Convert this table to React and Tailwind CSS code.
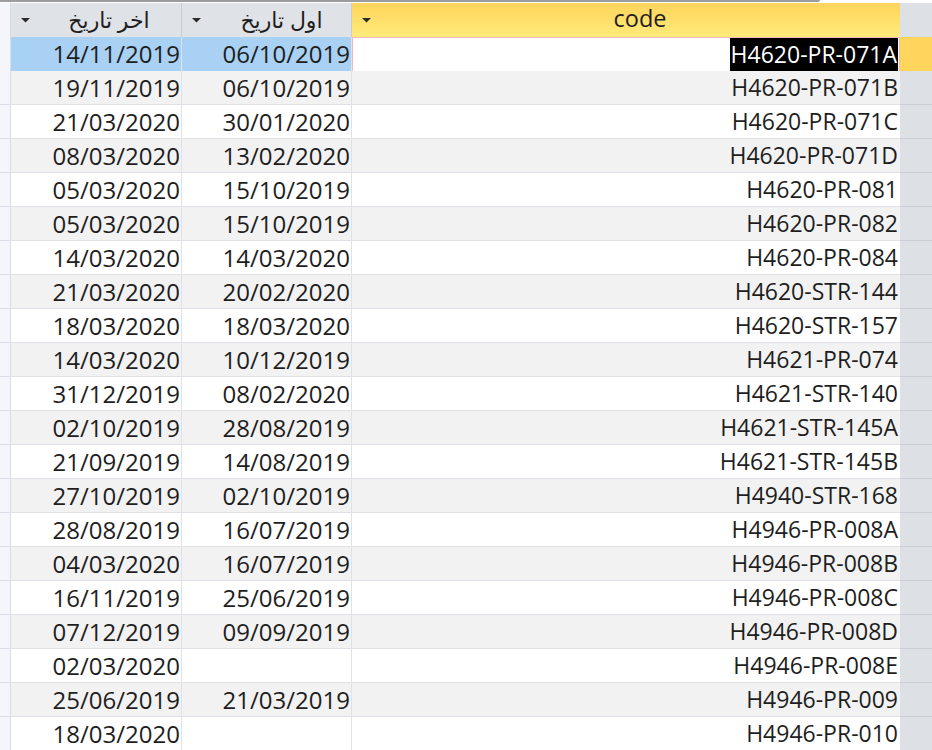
const rows = [
  ['14/11/2019', '06/10/2019', 'H4620-PR-071A'],
  ['19/11/2019', '06/10/2019', 'H4620-PR-071B'],
  ['21/03/2020', '30/01/2020', 'H4620-PR-071C'],
  ['08/03/2020', '13/02/2020', 'H4620-PR-071D'],
  ['05/03/2020', '15/10/2019', 'H4620-PR-081'],
  ['05/03/2020', '15/10/2019', 'H4620-PR-082'],
  ['14/03/2020', '14/03/2020', 'H4620-PR-084'],
  ['21/03/2020', '20/02/2020', 'H4620-STR-144'],
  ['18/03/2020', '18/03/2020', 'H4620-STR-157'],
  ['14/03/2020', '10/12/2019', 'H4621-PR-074'],
  ['31/12/2019', '08/02/2020', 'H4621-STR-140'],
  ['02/10/2019', '28/08/2019', 'H4621-STR-145A'],
  ['21/09/2019', '14/08/2019', 'H4621-STR-145B'],
  ['27/10/2019', '02/10/2019', 'H4940-STR-168'],
  ['28/08/2019', '16/07/2019', 'H4946-PR-008A'],
  ['04/03/2020', '16/07/2019', 'H4946-PR-008B'],
  ['16/11/2019', '25/06/2019', 'H4946-PR-008C'],
  ['07/12/2019', '09/09/2019', 'H4946-PR-008D'],
  ['02/03/2020', '', 'H4946-PR-008E'],
  ['25/06/2019', '21/03/2019', 'H4946-PR-009'],
  ['18/03/2020', '', 'H4946-PR-010'],
];

const font = { fontFamily: '"Open Sans", "DejaVu Sans", sans-serif' };

const Arrow = () => (
  <svg width="9" height="6" viewBox="0 0 9 6" className="shrink-0">
    <path d="M0 1h9L4.5 5.5z" fill="#2b2b2b" />
  </svg>
);

export default function App() {
  return (
    <div className="w-[932px] h-[750px] overflow-hidden bg-white text-[#1e1e1e]" style={font}>
      <div className="h-[3px] flex">
        <div className="w-[820px] h-[2px] bg-[#9c9c9c] rounded-br-[3px]" />
      </div>
      <div className="grid grid-cols-[11px_171px_170px_548px_32px] h-[34px]">
        <div className="bg-[#f4f6fb] border-r border-[#d6dbe3]" />
        <div className="relative flex items-center justify-center bg-[#dfe2e7] border-r border-[#c9ced6]">
          <span className="absolute left-[10px] top-[14px]"><Arrow /></span>
          <span className="text-[22px] pl-[26px] -mt-[2px]" dir="rtl">اخر تاريخ</span>
        </div>
        <div className="relative flex items-center justify-center bg-[#dfe2e7] border-r border-[#c9ced6]">
          <span className="absolute left-[10px] top-[14px]"><Arrow /></span>
          <span className="text-[22px] pl-[30px] -mt-[2px]" dir="rtl">اول تاريخ</span>
        </div>
        <div className="relative flex items-center justify-center bg-[linear-gradient(180deg,#ffd45a,#ffeb7c)]">
          <span className="absolute left-[10px] top-[14px]"><Arrow /></span>
          <span className="text-[23.5px] pl-[28px] -mt-[2px]">code</span>
        </div>
        <div className="bg-[#dde1e6]" />
      </div>
      {rows.map((r, i) => {
        const sel = i === 0;
        const zebra = i % 2 === 1 ? 'bg-[#f2f2f2]' : 'bg-white';
        return (
          <div key={i} className="grid grid-cols-[11px_171px_170px_548px_32px] h-[34px] leading-none">
            <div className="bg-[#f4f6fb] border-r border-b border-[#d9dee6]" />
            <div className={`flex items-center justify-end pr-[1px] text-[24px] border-r border-b border-[#dfe2e8] ${sel ? 'bg-[#a8d1f3]' : zebra}`}>{r[0]}</div>
            <div className={`flex items-center justify-end pr-[1px] text-[24px] border-r border-b border-[#dfe2e8] ${sel ? 'bg-[#a8d1f3]' : zebra}`}>{r[1]}</div>
            {sel ? (
              <div className="flex items-center justify-end pr-[1px] text-[23px] bg-white border border-[#f2b7bd]">
                <span className="bg-black text-white px-[1px] h-[33px] flex items-center">{r[2]}</span>
              </div>
            ) : (
              <div className={`flex items-center justify-end pr-[2px] text-[23px] border-b border-[#dfe2e8] ${zebra}`}>{r[2]}</div>
            )}
            <div className={`border-b ${sel ? 'bg-[#ffd55c] border-[#f0c040]' : 'bg-[#dde1e6] border-[#c9ced6]'}`} />
          </div>
        );
      })}
    </div>
  );
}
